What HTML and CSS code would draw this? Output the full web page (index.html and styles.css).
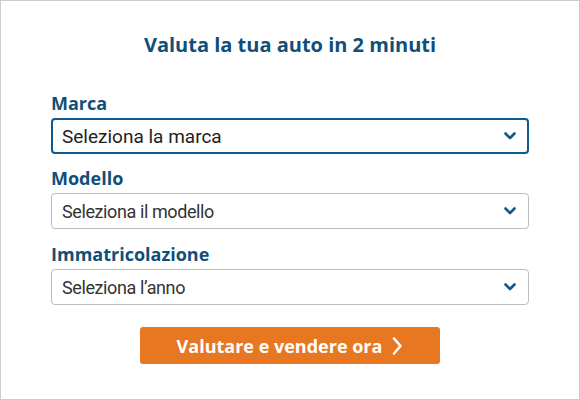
FILE: index.html
```html
<!DOCTYPE html>
<html lang="it">
<head>
<meta charset="utf-8">
<link rel="stylesheet" href="styles.css">
</head>
<body>
<div class="card">
  <h1 class="title">Valuta la tua auto in 2 minuti</h1>
  <form class="form">
    <div class="field">
      <label class="label">Marca</label>
      <div class="select focused"><span class="value">Seleziona la marca</span>
        <svg class="chev" width="12" height="8" viewBox="0 0 12 8"><path d="M1.5 1.5 L6 6 L10.5 1.5" fill="none" stroke="#105a8a" stroke-width="2.6" stroke-linecap="round" stroke-linejoin="round"/></svg>
      </div>
    </div>
    <div class="field field-2">
      <label class="label">Modello</label>
      <div class="select"><span class="value">Seleziona il modello</span>
        <svg class="chev" width="12" height="8" viewBox="0 0 12 8"><path d="M1.5 1.5 L6 6 L10.5 1.5" fill="none" stroke="#105a8a" stroke-width="2.6" stroke-linecap="round" stroke-linejoin="round"/></svg>
      </div>
    </div>
    <div class="field">
      <label class="label">Immatricolazione</label>
      <div class="select"><span class="value">Seleziona l’anno</span>
        <svg class="chev" width="12" height="8" viewBox="0 0 12 8"><path d="M1.5 1.5 L6 6 L10.5 1.5" fill="none" stroke="#105a8a" stroke-width="2.6" stroke-linecap="round" stroke-linejoin="round"/></svg>
      </div>
    </div>
    <div class="actions">
      <button type="button" class="btn">Valutare e vendere ora
        <svg class="btn-chev" width="12" height="20" viewBox="0 0 12 20"><path d="M3 2.5 L9.5 10 L3 17.5" fill="none" stroke="#fff" stroke-width="2.6" stroke-linecap="round" stroke-linejoin="round"/></svg>
      </button>
    </div>
  </form>
</div>
</body>
</html>
```
FILE: styles.css
```css
* { box-sizing: border-box; }
html, body { margin: 0; padding: 0; background: #fff; }
.card {
  width: 580px;
  height: 400px;
  border: 1px solid #cccccc;
  padding: 31px 50px 0 50px;
  font-family: "Open Sans", sans-serif;
}
.title {
  margin: 0;
  font-size: 20px;
  line-height: 26px;
  font-weight: 700;
  color: #0f4f7a;
  text-align: center;
}
.form { display: flex; flex-direction: column; margin-top: 35px; }
.field { display: flex; flex-direction: column; margin-bottom: 14px; }
.field-2 { margin-bottom: 15px; }
.label {
  font-size: 18px;
  line-height: 20px;
  font-weight: 700;
  color: #0f4f7a;
  margin-bottom: 5px;
}
.select {
  height: 36px;
  border: 1px solid #bdbdbd;
  border-radius: 4px;
  display: flex;
  align-items: center;
  justify-content: space-between;
  padding: 0 12px 0 10px;
  font-family: Roboto, "Liberation Sans", sans-serif;
  font-size: 18px;
  letter-spacing: -0.4px;
  color: #333;
}
.select.focused {
  border: 2px solid #0f5a8c;
  padding-left: 9px;
  padding-right: 11px;
  font-size: 19px;
  letter-spacing: 0;
  color: #222;
}
.chev { display: block; }
.actions { display: flex; justify-content: center; margin-top: 8px; }
.btn {
  width: 300px;
  height: 37px;
  border: none;
  border-radius: 3px;
  background: #e87722;
  color: #fff;
  font-family: "Open Sans", sans-serif;
  font-weight: 700;
  font-size: 18px;
  display: flex;
  align-items: center;
  justify-content: center;
  gap: 9px;
  padding: 0;
}
.btn-chev { display: block; }
```
